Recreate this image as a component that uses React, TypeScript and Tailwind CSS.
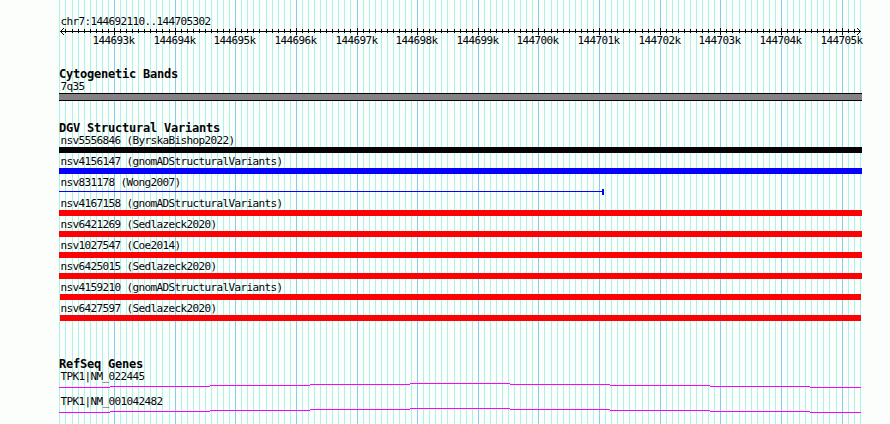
const REGION_START = 144692110;
const REGION_END = 144705302;
const PX_PER_BASE = 800 / (REGION_END - REGION_START + 1);

const toX = (base: number) => Math.round(60 + (base - REGION_START) * PX_PER_BASE);

const ticks = Array.from({ length: 133 }, (_, i) => {
  const base = 144692100 + i * 100;
  return { base, x: toX(base), major: base % 1000 === 0 };
});

const variants = [
  { name: "nsv5556846 (ByrskaBishop2022)", bar: "w-[803px] bg-[#040204]" },
  { name: "nsv4156147 (gnomADStructuralVariants)", bar: "w-[803px] bg-[#0402fc]" },
  { name: "nsv831178 (Wong2007)", partial: true },
  { name: "nsv4167158 (gnomADStructuralVariants)", bar: "w-[803px] bg-[#fc0204]" },
  { name: "nsv6421269 (Sedlazeck2020)", bar: "w-[803px] bg-[#fc0204]" },
  { name: "nsv1027547 (Coe2014)", bar: "w-[803px] bg-[#fc0204]" },
  { name: "nsv6425015 (Sedlazeck2020)", bar: "w-[803px] bg-[#fc0204]" },
  { name: "nsv4159210 (gnomADStructuralVariants)", bar: "ml-px w-[801px] bg-[#fc0204]" },
  { name: "nsv6427597 (Sedlazeck2020)", bar: "ml-px w-[801px] bg-[#fc0204]" },
];

const genes = ["TPK1|NM_022445", "TPK1|NM_001042482"];

function Grid() {
  return (
    <svg className="absolute inset-0" width="890" height="424" shapeRendering="crispEdges">
      {ticks.map((t) => (
        <rect key={t.base} x={t.x} y="0" width="1" height="424" fill={t.major ? "#84ceec" : "#acf2ec"} />
      ))}
    </svg>
  );
}

function Ruler() {
  return (
    <svg className="-ml-[59px] block" width="890" height="20" shapeRendering="crispEdges">
      <rect x="60" y="3" width="801" height="1" fill="#040204" />
      {ticks.slice(1, -1).map((t) => (
        <rect
          key={t.base}
          x={t.x}
          y={t.major ? 0 : 1}
          width="1"
          height={t.major ? 7 : 4}
          fill="#040204"
        />
      ))}
      <path
        d="M61 2h1v1h-1zM62 1h1v1h-1zM63 0h1v1h-1zM61 4h1v1h-1zM62 5h1v1h-1zM63 6h1v1h-1z"
        fill="#040204"
      />
      <path
        d="M859 2h1v1h-1zM858 1h1v1h-1zM857 0h1v1h-1zM859 4h1v1h-1zM858 5h1v1h-1zM857 6h1v1h-1z"
        fill="#040204"
      />
      {ticks
        .filter((t) => t.major)
        .map((t) => (
          <text key={t.base} x={t.x - 21.5} y="16" fill="#040204">
            {t.base / 1000}k
          </text>
        ))}
    </svg>
  );
}

function Heading({ children }: { children: string }) {
  return <h2 className="h-[13px] text-[12px] leading-3 font-bold tracking-[-0.224px]">{children}</h2>;
}

function Label({ children }: { children: string }) {
  return <p className="h-3 pl-[1.5px] leading-3">{children}</p>;
}

function PartialVariant() {
  return (
    <div className="flex h-1.5 w-[545px] items-stretch">
      <div className="mt-0.5 h-px flex-1 bg-[#0402fc]" />
      <div className="w-0.5 bg-[#0402fc]" />
    </div>
  );
}

function GeneLine() {
  return (
    <svg className="-ml-[59px] block" width="890" height="5" shapeRendering="crispEdges">
      <g fill="#fc02fc">
        <rect x="59" y="4" width="51" height="1" />
        <rect x="110" y="3" width="100" height="1" />
        <rect x="210" y="2" width="100" height="1" />
        <rect x="310" y="1" width="100" height="1" />
        <rect x="410" y="0" width="100" height="1" />
        <rect x="510" y="1" width="100" height="1" />
        <rect x="610" y="2" width="100" height="1" />
        <rect x="710" y="3" width="100" height="1" />
        <rect x="810" y="4" width="51" height="1" />
      </g>
    </svg>
  );
}

export default function App() {
  return (
    <div className="relative h-[424px] w-[890px] overflow-hidden bg-[#fcfefc] font-['DejaVu_Sans_Mono',monospace] text-[11px] tracking-[-0.622px] whitespace-pre text-[#040204]">
      <Grid />
      <main className="relative pt-4 pl-[59px]">
        <Label>chr7:144692110..144705302</Label>
        <Ruler />

        <section className="pt-5">
          <Heading>Cytogenetic Bands</Heading>
          <Label>7q35</Label>
          <div className="h-2 w-[803px] border-y border-[#040204] bg-[#848284]" />
        </section>

        <section className="pt-[21px]">
          <Heading>DGV Structural Variants</Heading>
          <div className="flex flex-col gap-[3px]">
            {variants.map((v) => (
              <div key={v.name}>
                <Label>{v.name}</Label>
                {v.partial ? <PartialVariant /> : <div className={`h-1.5 ${v.bar}`} />}
              </div>
            ))}
          </div>
        </section>

        <section className="pt-[37px]">
          <Heading>RefSeq Genes</Heading>
          <div className="flex flex-col gap-2">
            {genes.map((g) => (
              <div key={g}>
                <Label>{g}</Label>
                <GeneLine />
              </div>
            ))}
          </div>
        </section>
      </main>
    </div>
  );
}
